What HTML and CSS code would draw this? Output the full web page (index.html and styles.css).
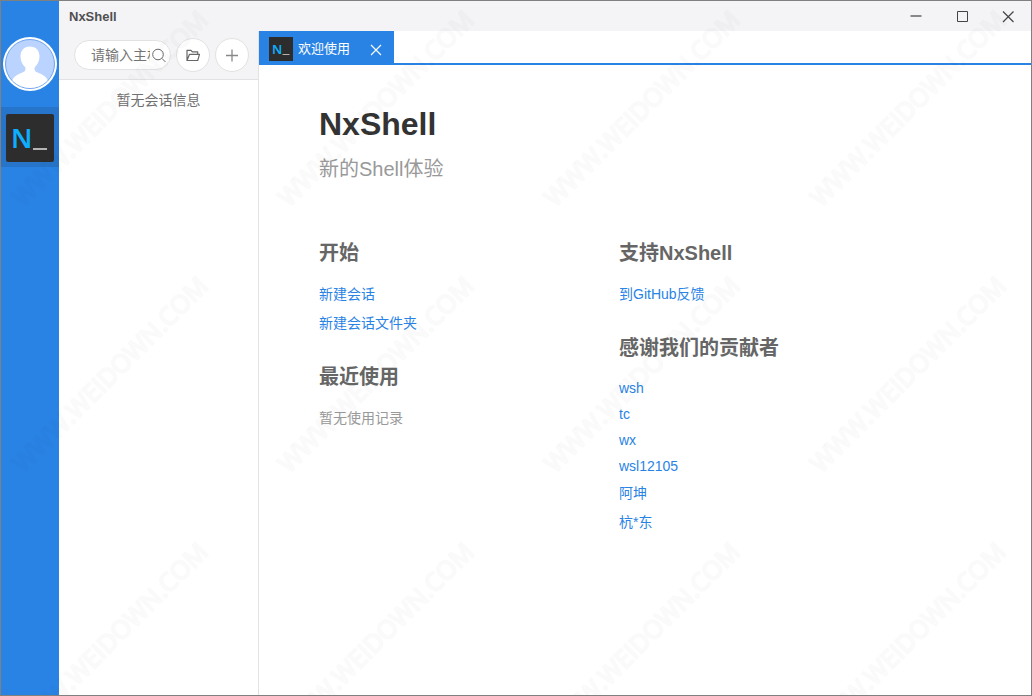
FILE: index.html
```html
<!DOCTYPE html>
<html lang="zh-CN">
<head>
<meta charset="utf-8">
<meta name="viewport" content="width=device-width, initial-scale=1">
<title>NxShell</title>
<link rel="stylesheet" href="styles.css">
</head>
<body>
<div class="window">
  <nav class="rail">
    <button class="avatar" aria-label="用户">
      <svg viewBox="0 0 54 54" aria-hidden="true">
        <defs><clipPath id="face"><circle cx="27" cy="27" r="24"/></clipPath></defs>
        <circle cx="27" cy="27" r="27" fill="#fff"/>
        <circle cx="27" cy="27" r="24.5" fill="#bad3ff" stroke="#6fa6ee" stroke-width="1"/>
        <path clip-path="url(#face)" fill="#fff" d="M27 9.500c-6 0-9.500 4-9.500 10 0 4.500 2 8 4.500 10.500 1 1.500.500 4-1.500 5C16 37 11 38.500 9 44v10h36V44c-2-5.500-7-7-11.500-9-2-1-2.500-3.500-1.500-5 2.500-2.500 4.500-6 4.500-10.500 0-6-3.500-10-9.500-10z"/>
      </svg>
    </button>
    <button class="rail-item" aria-label="NxShell">
      <svg class="rail-logo" viewBox="0 0 48 48" aria-hidden="true">
        <rect width="48" height="48" rx="2" fill="#2d2d2d"/>
        <text class="logo-letter" x="5" y="34" font-size="27">N</text>
        <path d="M27 35h14" stroke="#b4b4b4" stroke-width="2"/>
      </svg>
    </button>
  </nav>
  <div class="workspace">
    <header class="titlebar">
      <span class="app-name">NxShell</span>
      <div class="window-controls">
        <button aria-label="最小化"><svg viewBox="0 0 12 12" aria-hidden="true"><path d="M.5 6h11" stroke="#888" stroke-width="2"/></svg></button>
        <button aria-label="最大化"><svg viewBox="0 0 12 12" aria-hidden="true"><path d="M1.500 1.500h10v10h-10z" fill="none" stroke="#444"/></svg></button>
        <button aria-label="关闭"><svg viewBox="0 0 12 12" aria-hidden="true"><path d="M1 1.500l10.500 10.500M11.500 1.500L1 12" fill="none" stroke="#444" stroke-width="1.200"/></svg></button>
      </div>
    </header>
    <div class="panes">
      <aside class="sidebar">
        <div class="toolbar">
          <label class="search">
            <input type="text" placeholder="请输入主机" aria-label="搜索主机">
            <svg viewBox="0 0 14 14" aria-hidden="true"><g fill="none" stroke="#6a6a6a"><circle cx="6" cy="6.500" r="5.300"/><path d="M9.800 10.300l3.700 3.700"/></g></svg>
          </label>
          <button class="round" aria-label="新建会话文件夹">
            <svg viewBox="0 0 14 14" aria-hidden="true"><path d="M1 12.500V2.300h4l1.300 1.500h5.400v2.500M1 12.500l2.500-6.200h10l-1.800 6.200z" fill="none" stroke="#666" stroke-width="1.200" stroke-linejoin="round"/></svg>
          </button>
          <button class="round" aria-label="新建会话">
            <svg viewBox="0 0 14 14" aria-hidden="true"><path d="M7 1.500v12M1 7.500h12" stroke="#888" stroke-width="1.300"/></svg>
          </button>
        </div>
        <p class="no-session">暂无会话信息</p>
      </aside>
      <main class="main">
        <div class="tabs">
          <div class="tab">
            <svg class="tab-logo" viewBox="0 0 24 24" aria-hidden="true">
              <rect width="24" height="24" fill="#2d2d2d"/>
              <text class="logo-letter" x="3" y="17" font-size="13">N</text>
              <path d="M13.500 17.500h7" stroke="#b4b4b4" stroke-width="1"/>
            </svg>
            <span>欢迎使用</span>
            <button class="tab-close" aria-label="关闭标签"><svg viewBox="0 0 12 12" aria-hidden="true"><path d="M1 2l10 10M11 2L1 12" stroke="#fff" stroke-width="1.100"/></svg></button>
          </div>
        </div>
        <div class="welcome">
          <h1>NxShell</h1>
          <p class="subtitle">新的Shell体验</p>
          <div class="columns">
            <div class="column">
              <section>
                <h2>开始</h2>
                <ul>
                  <li><a href="#">新建会话</a></li>
                  <li><a href="#">新建会话文件夹</a></li>
                </ul>
              </section>
              <section>
                <h2>最近使用</h2>
                <p class="empty">暂无使用记录</p>
              </section>
            </div>
            <div class="column">
              <section>
                <h2>支持NxShell</h2>
                <ul>
                  <li><a href="#">到GitHub反馈</a></li>
                </ul>
              </section>
              <section>
                <h2>感谢我们的贡献者</h2>
                <ul>
                  <li class="latin"><a href="#">wsh</a></li>
                  <li class="latin"><a href="#">tc</a></li>
                  <li class="latin"><a href="#">wx</a></li>
                  <li class="latin"><a href="#">wsl12105</a></li>
                  <li><a href="#">阿坤</a></li>
                  <li><a href="#">杭*东</a></li>
                </ul>
              </section>
            </div>
          </div>
        </div>
      </main>
    </div>
  </div>
  <svg class="watermark" aria-hidden="true">
    <defs>
      <pattern id="mark" x="5" y="5" width="266" height="266" patternUnits="userSpaceOnUse">
        <text class="mark-text" transform="translate(17 202) rotate(-45)">WWW.WEIDOWN.COM</text>
      </pattern>
    </defs>
    <rect width="100%" height="100%" fill="url(#mark)"/>
  </svg>
</div>
</body>
</html>
```
FILE: styles.css
```css
* {
  box-sizing: border-box;
}

body {
  margin: 0;
  font: 14px/19px "Liberation Sans", "Noto Sans CJK SC", sans-serif;
  color: #666;
}

h1, h2, p, ul {
  margin: 0;
  padding: 0;
}

ul {
  list-style: none;
}

button {
  padding: 0;
  border: 0;
  background: none;
  display: flex;
  align-items: center;
  justify-content: center;
}

a {
  color: #2983e5;
  text-decoration: none;
}

svg {
  display: block;
}

.window {
  position: relative;
  display: flex;
  min-height: 100vh;
  border: 1px solid #808080;
  background: #fff;
  overflow: hidden;
}

.rail {
  flex: none;
  width: 58px;
  padding-top: 36px;
  background: #2983e5;
}

.avatar {
  width: 54px;
  height: 54px;
  margin: 0 auto 16px;
}

.avatar svg {
  width: 54px;
  height: 54px;
}

.rail-item {
  width: 100%;
  height: 60px;
  padding-top: 1px;
  background: #2675cb;
}

.rail-logo {
  width: 48px;
  height: 48px;
}

.logo-letter {
  font-family: "Noto Sans", sans-serif;
  font-weight: 600;
  fill: #0eaeff;
}

.workspace {
  flex: 1;
  min-width: 0;
  display: flex;
  flex-direction: column;
}

.titlebar {
  display: flex;
  justify-content: space-between;
  align-items: center;
  height: 30px;
  padding-left: 10px;
  background: #f4f4f7;
}

.app-name {
  font-size: 13px;
  font-weight: bold;
  color: #505050;
}

.window-controls {
  display: flex;
}

.window-controls button {
  width: 46px;
  height: 30px;
}

.window-controls svg {
  width: 12px;
  height: 12px;
  overflow: visible;
}

.panes {
  flex: 1;
  display: flex;
}

.sidebar {
  flex: none;
  width: 200px;
  border-right: 1px solid #e2e2e2;
}

.toolbar {
  display: flex;
  align-items: center;
  gap: 5px;
  height: 49px;
  padding: 0 9px 0 15px;
  border-bottom: 1px solid #e2e2e2;
  background: #f4f4f7;
}

.search {
  flex: 1;
  min-width: 0;
  display: flex;
  align-items: center;
  gap: 2px;
  height: 30px;
  padding: 0 4px 0 16px;
  border: 1px solid #e2e2e2;
  border-radius: 15px;
  background: #fff;
}

.search input {
  flex: 1;
  min-width: 0;
  height: 28px;
  padding: 0;
  border: 0;
  outline: 0;
  background: none;
  font: inherit;
}

.search input::placeholder {
  color: #757575;
}

.search svg {
  flex: none;
  width: 14px;
  height: 14px;
  overflow: visible;
}

.round {
  flex: none;
  width: 34px;
  height: 34px;
  border: 1px solid #e2e2e2;
  border-radius: 50%;
  background: #fff;
}

.round svg {
  width: 14px;
  height: 14px;
}

.no-session {
  padding-top: 11px;
  text-align: center;
  color: #707070;
}

.main {
  flex: 1;
  min-width: 0;
}

.tabs {
  display: flex;
  height: 34px;
  border-bottom: 2px solid #2983e5;
}

.tab {
  display: flex;
  align-items: center;
  height: 34px;
  padding: 2px 12px 0 10px;
  background: #2983e5;
  color: #fff;
  font-size: 13px;
}

.tab span {
  padding-bottom: 2px;
}

.tab-logo {
  width: 24px;
  height: 24px;
  margin-right: 5px;
}

.tab-close {
  width: 12px;
  height: 12px;
  margin-left: 20px;
}

.tab-close svg {
  width: 12px;
  height: 12px;
  overflow: visible;
}

.welcome {
  padding: 40px 60px;
}

h1 {
  font-size: 32px;
  line-height: 38px;
  color: #333;
}

.subtitle {
  margin-top: 13px;
  font-size: 20px;
  line-height: 26px;
  color: #999;
}

.columns {
  display: flex;
  margin-top: 58px;
}

.column {
  width: 300px;
  display: flex;
  flex-direction: column;
  gap: 31px;
}

h2 {
  margin-bottom: 19px;
  font-size: 20px;
  line-height: 26px;
  color: #666;
}

.column ul {
  display: flex;
  flex-direction: column;
  gap: 10px;
}

.latin {
  line-height: 16px;
}

.empty {
  color: #999;
}

.watermark {
  position: absolute;
  inset: 0;
  width: 100%;
  height: 100%;
  pointer-events: none;
}

.mark-text {
  font: 25px "Open Sans", sans-serif;
  fill: none;
  stroke: #000;
  stroke-opacity: 0.02;
  stroke-width: 2;
}
```
